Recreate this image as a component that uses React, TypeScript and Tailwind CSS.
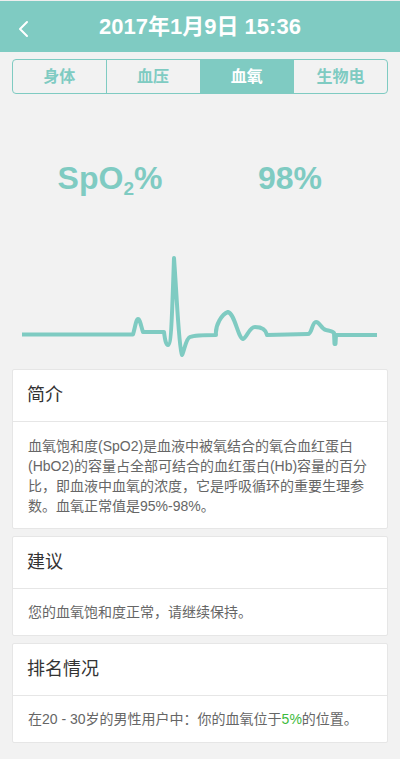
import React from "react";

const font = { fontFamily: '"Liberation Sans", "Noto Sans CJK SC", sans-serif' };

function Card({ title, children, bodyClass }: { title: string; children: React.ReactNode; bodyClass: string }) {
  return (
    <div className="mx-[12px] bg-white border border-[#e6e6e6] rounded-[2px]">
      <div className="h-[52px] border-b border-[#e6e6e6] flex items-center pl-[14px] text-[18px] text-[#333333]">
        {title}
      </div>
      <div className={`pl-[15px] pr-[12px] text-[14px] leading-[20px] text-[#666666] ${bodyClass}`}>{children}</div>
    </div>
  );
}

export default function App() {
  const tabs = ["身体", "血压", "血氧", "生物电"];
  const ecg =
    "M22 334.5 L133 334.5 C135 328 136 319 138 319 C140 319 141 326 143 332 L164 332 C165 340 166 345 168 345 C171 345 172 320 174 258 C177 300 179 350 182 355 C184 352 186 338 190 337 C195 335 205 335 216 335 C215 325 222 314 228 312 C235 314 238 338 243 339 C247 338 249 327 255 327 C262 327 266 330 267 335 L308 334 C312 334 312 322 316 322 C320 322 321 329 326 330 C331 331 333 331 334 333 L334.5 344 L335.5 344 L336 335 L377 335";
  return (
    <div className="w-[400px] h-[759px] bg-[#f2f2f2] overflow-hidden" style={font}>
      <div className="h-[52px] bg-[#7fcbc2] border-t border-[#eeeeee] flex items-center justify-center relative">
        <svg className="absolute left-[16px] top-[19px]" width="14" height="18" viewBox="0 0 14 18">
          <path d="M11 2 L4 9 L11 16" fill="none" stroke="white" strokeWidth="2" strokeLinecap="round" strokeLinejoin="round" />
        </svg>
        <span className="text-white font-bold text-[22px] leading-none">2017年1月9日 15:36</span>
      </div>

      <div className="mx-[12px] mt-[7px] h-[35px] flex border border-[#7fcbc2] rounded-[4px] overflow-hidden">
        {tabs.map((t, i) => (
          <div
            key={t}
            className={`flex-1 flex items-center justify-center text-[16px] font-semibold ${
              i === 2 ? "bg-[#7fcbc2] text-white" : "text-[#7fcbc2]"
            } ${i > 0 ? "border-l border-[#7fcbc2]" : ""}`}
          >
            {t}
          </div>
        ))}
      </div>

      <div className="px-[20px] pt-[64px] h-[104px] grid grid-cols-2 text-[#7fcbc2] font-bold text-[32px] leading-[40px]">
        <div className="text-center h-[40px]">
          SpO<span className="text-[19px] leading-none relative top-[6px]">2</span>%
        </div>
        <div className="text-center h-[40px]">98%</div>
      </div>

      <svg className="block mt-[52px]" width="400" height="110" viewBox="0 250 400 110">
        <path d={ecg} fill="none" stroke="#7fcbc2" strokeWidth="4" strokeLinejoin="round" strokeLinecap="butt" />
      </svg>

      <div className="mt-[9px] flex flex-col gap-[7px]">
        <Card title="简介" bodyClass="pt-[14px] pb-[12px]">
          <div>血氧饱和度(SpO2)是血液中被氧结合的氧合血红蛋白</div>
          <div>(HbO2)的容量占全部可结合的血红蛋白(Hb)容量的百分</div>
          <div>比，即血液中血氧的浓度，它是呼吸循环的重要生理参</div>
          <div>数。血氧正常值是95%-98%。</div>
        </Card>
        <Card title="建议" bodyClass="py-[13px]">
          <div>您的血氧饱和度正常，请继续保持。</div>
        </Card>
        <Card title="排名情况" bodyClass="py-[13px]">
          <div>
            在20 - 30岁的男性用户中：你的血氧位于<span className="text-[#3cba3c]">5%</span>的位置。
          </div>
        </Card>
      </div>
    </div>
  );
}
